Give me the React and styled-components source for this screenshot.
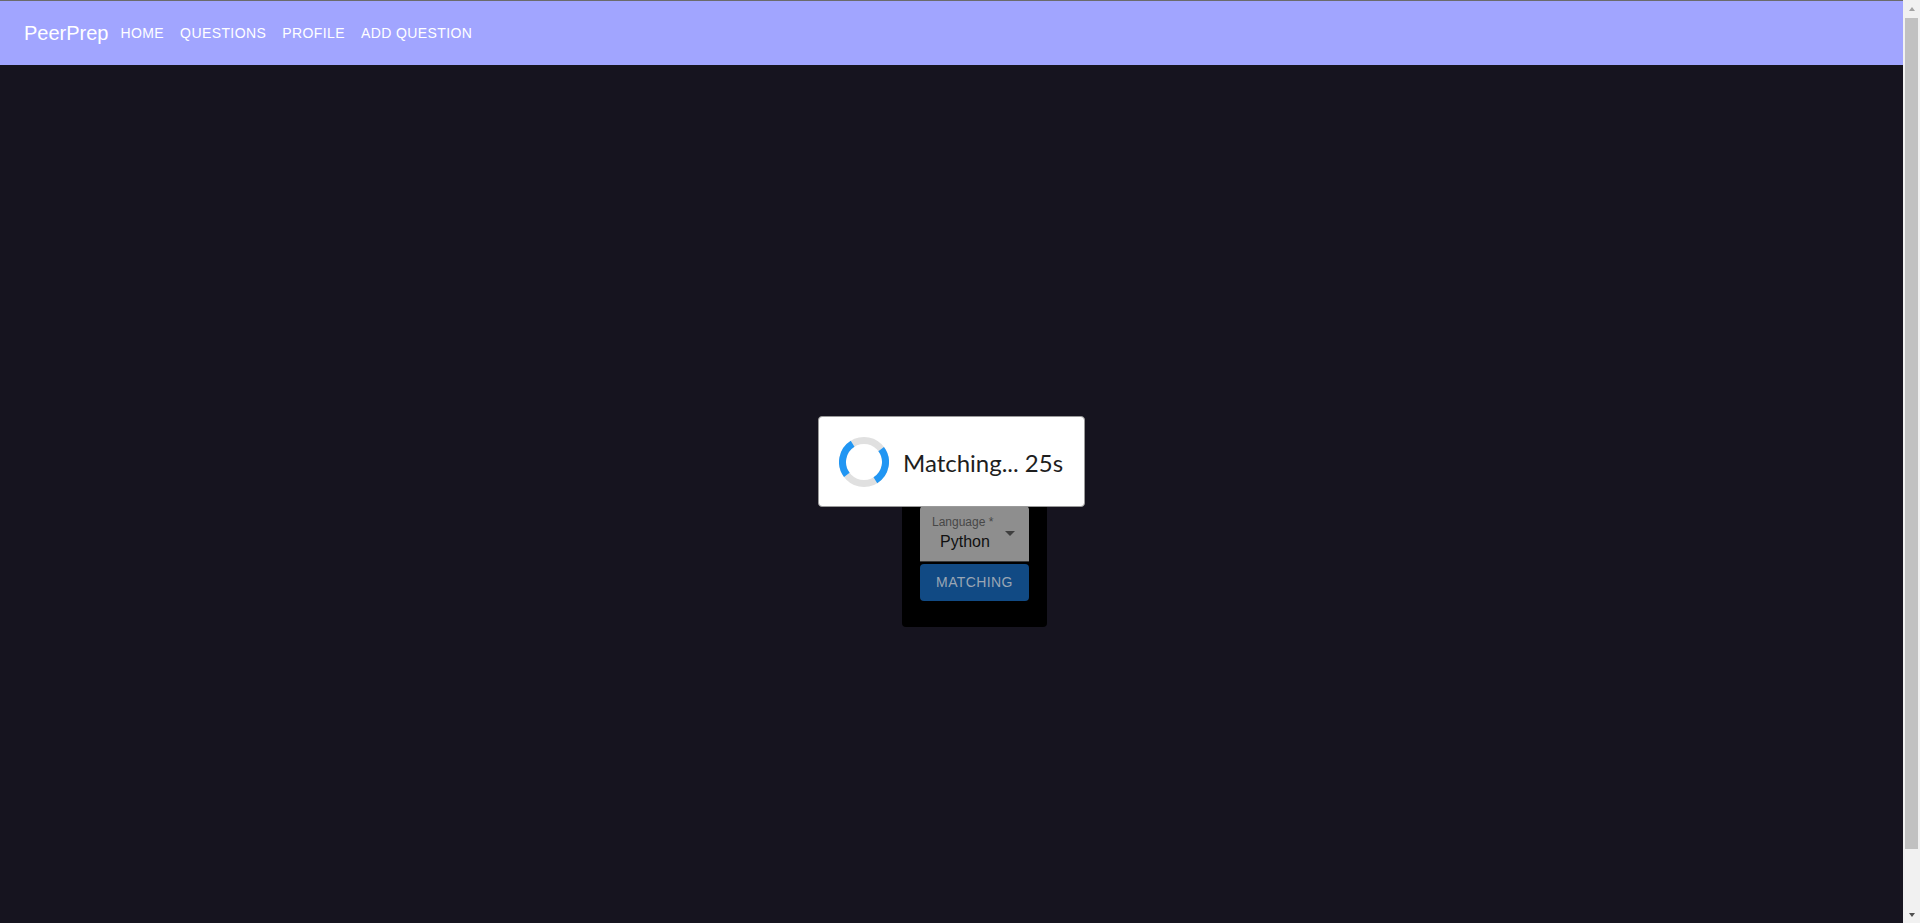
import React from "react";
import styled, { createGlobalStyle } from "styled-components";

const GlobalStyle = createGlobalStyle`
  html, body {
    margin: 0;
    padding: 0;
  }
  body {
    padding-right: 17px;
    background-color: #16141f;
    font-family: "Liberation Sans", Arial, sans-serif;
  }
`;

const NavBar = styled.header`
  height: 64px;
  border-top: 1px solid #6b6b6b;
  background-color: #a1a5ff;
  display: flex;
  align-items: center;
  padding: 0 24px;
`;

const Brand = styled.div`
  font-size: 20px;
  color: #fff;
  margin-right: 4px;
`;

const NavButton = styled.button`
  background: none;
  border: none;
  padding: 6px 8px;
  font-family: "Liberation Sans", Arial, sans-serif;
  font-size: 14px;
  line-height: 24px;
  letter-spacing: 0.4px;
  text-transform: uppercase;
  color: #fff;
  cursor: pointer;
`;

const Main = styled.main`
  min-height: 100vh;
  display: flex;
  align-items: center;
  justify-content: center;
`;

// top part of the card sits under the matching dialog
const Card = styled.div`
  width: 109px;
  margin-left: 46px;
  padding: 79px 18px 26px;
  background-color: #000;
  border-radius: 4px;
  display: flex;
  flex-direction: column;
  gap: 2px;
`;

const SelectBox = styled.div`
  height: 55px;
  border-bottom: 1px solid #383838;
  border-radius: 4px 4px 0 0;
  background-color: #8e8e8e;
  display: flex;
  align-items: center;
  padding-left: 12px;
`;

const SelectContent = styled.div`
  flex: 1;
  align-self: flex-start;
  padding-top: 10px;
  display: flex;
  flex-direction: column;
`;

const SelectLabel = styled.span`
  font-size: 12px;
  line-height: 12px;
  color: #474747;
`;

const SelectValue = styled.span`
  margin-top: 6px;
  font-size: 16px;
  line-height: 16px;
  text-align: center;
  color: #111;
`;

const Arrow = styled.svg`
  width: 24px;
  height: 24px;
  margin-right: 7px;
  fill: #3f3f3f;
`;

const MatchButton = styled.button`
  height: 37px;
  border: none;
  border-radius: 4px;
  background-color: #114a84;
  color: #9aa6b4;
  font-family: "Liberation Sans", Arial, sans-serif;
  font-size: 14px;
  letter-spacing: 0.4px;
  text-transform: uppercase;
`;

const Overlay = styled.div`
  position: fixed;
  inset: 0 17px 0 0;
  display: flex;
  align-items: center;
  justify-content: center;
  pointer-events: none;
`;

const Dialog = styled.div`
  display: flex;
  align-items: center;
  gap: 14px;
  padding: 20px 20px 19px 20px;
  background-color: #fff;
  border: 1px solid #9a9a9a;
  border-radius: 4px;
`;

const Spinner = styled.svg`
  width: 50px;
  height: 50px;
  flex-shrink: 0;
`;

const DialogText = styled.span`
  font-family: Lato, "Open Sans", sans-serif;
  font-size: 24px;
  color: #1e1e1e;
  padding-right: 1px;
`;

// window scrollbar, drawn since the headless browser hides its own
const ScrollBar = styled.aside`
  position: fixed;
  top: 0;
  right: 0;
  bottom: 0;
  width: 17px;
  background-color: #f1f1f1;
  display: flex;
  flex-direction: column;
`;

const ScrollArrow = styled.div`
  height: 17px;
  flex-shrink: 0;
  display: flex;
  align-items: center;
  justify-content: center;
  &::before {
    content: "";
    width: 0;
    height: 0;
    border-left: 3.5px solid transparent;
    border-right: 3.5px solid transparent;
    ${(p) =>
      p.$down
        ? "border-top: 4px solid #505050;"
        : "border-bottom: 4px solid #a3a3a3;"}
  }
`;

const ScrollTrack = styled.div`
  flex: 1;
  padding: 1px 2px;
`;

const ScrollThumb = styled.div`
  height: 831px;
  background-color: #c1c1c1;
`;

function Select({ label, value }) {
  return (
    <SelectBox>
      <SelectContent>
        <SelectLabel>{label} *</SelectLabel>
        <SelectValue>{value}</SelectValue>
      </SelectContent>
      <Arrow viewBox="0 0 24 24">
        <path d="M7 10l5 5 5-5z" />
      </Arrow>
    </SelectBox>
  );
}

export default function App() {
  return (
    <>
      <GlobalStyle />
      <NavBar>
        <Brand>PeerPrep</Brand>
        <NavButton>Home</NavButton>
        <NavButton>Questions</NavButton>
        <NavButton>Profile</NavButton>
        <NavButton>Add Question</NavButton>
      </NavBar>
      <Main>
        <Card>
          <Select label="Language" value="Python" />
          <MatchButton disabled>Matching</MatchButton>
        </Card>
      </Main>
      <Overlay>
        <Dialog>
          <Spinner viewBox="0 0 50 50">
            <circle cx="25" cy="25" r="21.5" fill="none" stroke="#e0e0e0" strokeWidth="7" />
            <path d="M13.61 6.77 A21.5 21.5 0 0 0 7.83 37.94" fill="none" stroke="#2196f3" strokeWidth="7" />
            <path d="M36.39 43.23 A21.5 21.5 0 0 0 42.17 12.06" fill="none" stroke="#2196f3" strokeWidth="7" />
          </Spinner>
          <DialogText>Matching... 25s</DialogText>
        </Dialog>
      </Overlay>
      <ScrollBar>
        <ScrollArrow />
        <ScrollTrack>
          <ScrollThumb />
        </ScrollTrack>
        <ScrollArrow $down />
      </ScrollBar>
    </>
  );
}
